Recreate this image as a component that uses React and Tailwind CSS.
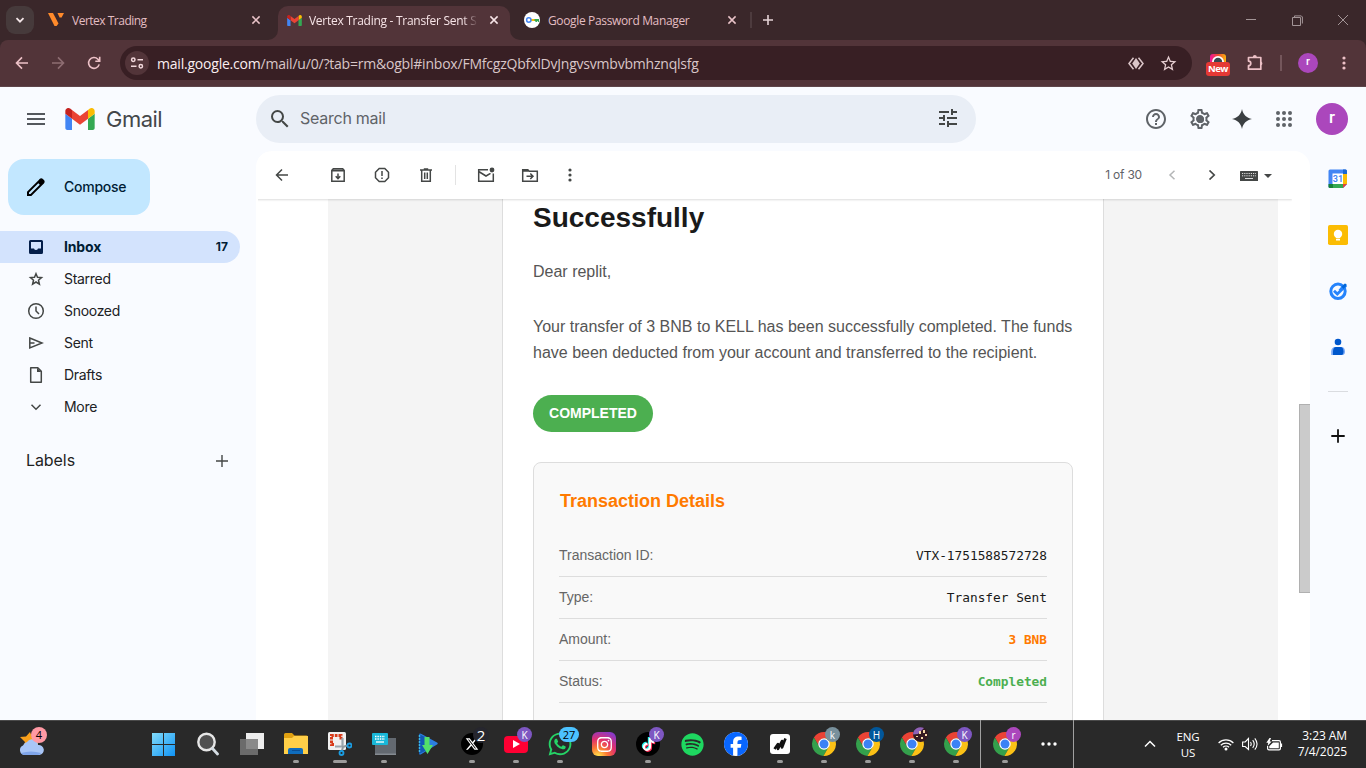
import React from "react";
import { MdStarBorder, MdSearch, MdTune, MdHelpOutline, MdOutlineSettings } from "react-icons/md";
import { FaWhatsapp, FaInstagram, FaTiktok, FaSpotify, FaFacebook, FaXTwitter } from "react-icons/fa6";

const segoe = "font-['Open_Sans','Noto_Sans',sans-serif]";
const google = "font-['Inter',sans-serif]";
const arial = "font-['Liberation_Sans',Arial,sans-serif]";
const mono = "font-['DejaVu_Sans_Mono',monospace]";

/* Stroke icon on a square grid; one unit is one pixel. */
function Line({ s = 20, w = 1.5, className = "", children }) {
  return (
    <svg width={s} height={s} viewBox={`0 0 ${s} ${s}`} fill="none" stroke="currentColor" strokeWidth={w} className={`shrink-0 ${className}`}>
      {children}
    </svg>
  );
}

function Cell({ className = "", children }) {
  return <div className={`flex h-full shrink-0 items-center justify-center ${className}`}>{children}</div>;
}

function GmailMark({ className }) {
  return (
    <svg viewBox="52 42 88 66" className={className}>
      <path fill="#4285f4" d="M58 108h14V74L52 59v43c0 3.32 2.69 6 6 6" />
      <path fill="#34a853" d="M120 108h14c3.32 0 6-2.69 6-6V59l-20 15" />
      <path fill="#fbbc04" d="M120 48v26l20-15v-8c0-7.42-8.47-11.65-14.4-7.2" />
      <path fill="#ea4335" d="M72 74V48l24 18 24-18v26L96 92" />
      <path fill="#c5221f" d="M52 51v8l20 15V48l-5.6-4.2c-5.94-4.45-14.4-.22-14.4 7.2" />
    </svg>
  );
}

function CloseX({ className = "text-[#e9c3c8]" }) {
  return <Line s={10} w={1.5} className={className}><path d="M1.4 1.4l7.2 7.2M8.6 1.4L1.4 8.6" /></Line>;
}

function TabStrip() {
  return (
    <div className={`flex h-10 bg-[#3a272a] text-[12px] text-[#e3bdc2] ${segoe}`}>
      <div className="ml-[6px] mt-[6px] flex size-7 items-center justify-center rounded-[9px] bg-[#463a3b] text-[#f3e6e8]">
        <Line s={10} w={1.8}><path d="M1.5 3.2L5 6.700l3.500-3.500" /></Line>
      </div>
      <div className="ml-[14px] flex h-10 w-[230px] items-center">
        <svg width="16" height="14" viewBox="0 0 16 14">
          <path fill="#ff8a2b" d="M0 0h5l5.500 10.500L8.600 13H6.500z" />
          <path fill="#ff8a2b" d="M9.500 0H16l-2.400 4.400h-2z" />
        </svg>
        <span className="ml-2 w-[179px] whitespace-nowrap pt-px tracking-[-0.5px]">Vertex Trading</span>
        <CloseX />
      </div>
      <div className="relative mt-[6px] flex h-[34px] w-[232px] items-center rounded-t-[10px] bg-[#523439] text-[#f7e4e7]">
        <svg width="10" height="10" className="absolute -left-[10px] bottom-0"><path d="M10 0v10H0A10 10 0 0 0 10 0" fill="#523439" /></svg>
        <svg width="10" height="10" className="absolute -right-[10px] bottom-0"><path d="M0 0v10h10A10 10 0 0 1 0 0" fill="#523439" /></svg>
        <GmailMark className="mb-[6px] ml-[9px] h-[11px] w-[15px]" />
        <span className="mb-[5px] ml-[7px] w-[168px] whitespace-nowrap tracking-[-0.28px] [mask-image:linear-gradient(to_right,black_154px,transparent_169px)]">Vertex Trading - Transfer Sent Su</span>
        <CloseX className="mb-[6px] ml-[12px] text-[#f7e4e7]" />
      </div>
      <div className="ml-[14px] flex h-10 w-[226px] items-center">
        <svg width="16" height="16" viewBox="0 0 16 16">
          <circle cx="8" cy="8" r="8" fill="#fff" />
          <path d="M7 8h4" stroke="#fbbc04" strokeWidth="2" />
          <path d="M10.500 7H15v3h-1.200V9h-.8v1h-1.600V9h-.9z" fill="#34a853" />
          <circle cx="4.800" cy="8" r="2.200" fill="none" stroke="#4285f4" strokeWidth="1.500" />
        </svg>
        <span className="ml-2 w-[179px] whitespace-nowrap pt-px tracking-[-0.35px]">Google Password Manager</span>
        <CloseX />
      </div>
      <div className="mt-3 h-4 w-[2px] bg-[#4d3b3e]" />
      <Cell className="ml-[6px] w-5 text-[#e5d3d6]"><Line s={12} w={1.600}><path d="M6 1v10M1 6h10" /></Line></Cell>
      <div className="ml-auto flex h-10 text-[#a39597]">
        <Cell className="w-[46px]"><Line s={10} w={1}><path d="M0 4.500h10" /></Line></Cell>
        <Cell className="w-[46px]"><Line s={11} w={1}><path d="M.5 2.500h8v8h-8zM2.500 2V.9h6.800L10.400 2v6.500" /></Line></Cell>
        <Cell className="w-[46px]"><Line s={10} w={1}><path d="M0 0l10 10M10 0L0 10" /></Line></Cell>
      </div>
    </div>
  );
}

function AddressBar() {
  return (
    <div className="bg-[#3a272a]">
      <div className={`flex h-[47px] items-center rounded-t-[8px] border-b border-[#5e454a] bg-[#523439] pl-1 text-[#edc1c7] ${segoe}`}>
        <Cell className="w-9"><Line s={14} w={1.600}><path d="M13 7H2M7 1.400L1.500 7 7 12.600" /></Line></Cell>
        <Cell className="w-9 text-[#8e6d72]"><Line s={14} w={1.600}><path d="M1 7h11M7 1.400L12.500 7 7 12.600" /></Line></Cell>
        <Cell className="w-9"><Line s={14} w={1.600}><path d="M12.200 8.400A5.400 5.400 0 1 1 10.900 3.200L12.600 5M12.700 .8V5.200H8.300" /></Line></Cell>
        <div className="ml-2 flex h-[34px] w-[1072px] items-center rounded-full bg-[#381f24] pl-[5px]">
          <div className="flex size-6 items-center justify-center rounded-full bg-[#523439] text-[#f2d8dc]">
            <Line s={14} w={1.500}><circle cx="3.300" cy="3.800" r="1.700" /><path d="M7.500 3.800H13M1 10.200h5.500" /><circle cx="10.800" cy="10.200" r="1.700" /></Line>
          </div>
          <span className="ml-2 w-[540px] whitespace-nowrap text-[14px] tracking-[-0.21px] text-[#d8c6c8]"><span className="text-[#fbeef0]">mail.google.com</span>/mail/u/0/?tab=rm&amp;ogbl#inbox/FMfcgzQbfxlDvJngvsvmbvbmhznqlsfg</span>
          <Cell className="ml-[423px] w-8 text-[#dcc6c9]">
            <svg width="16" height="13" viewBox="0 0 16 13" fill="none" stroke="currentColor" strokeWidth="1.500">
              <path d="M5.500 .8L1 6.500l4.500 5.700M10.500 .8l4.500 5.700-4.500 5.700" /><path d="M8 1l3.800 5.500L8 12 4.200 6.500z" fill="currentColor" stroke="none" />
            </svg>
          </Cell>
          <Cell className="w-8 text-[#e6ced1]"><MdStarBorder size={19} /></Cell>
        </div>
        <div className="ml-[7px] flex w-9 flex-col items-center pl-[2px] pt-[4px]">
          <svg width="16" height="8" viewBox="0 0 16 8">
            <defs><linearGradient id="ext"><stop stopColor="#f0149a" /><stop offset=".5" stopColor="#f04a30" /><stop offset="1" stopColor="#fbb40e" /></linearGradient></defs>
            <rect width="16" height="12" rx="3" fill="url(#ext)" /><circle cx="8" cy="8" r="6" fill="#fff" /><circle cx="8" cy="8" r="4.200" fill="#37474f" />
          </svg>
          <div className="flex h-[14px] w-6 items-center justify-center rounded-[3px] bg-[#e53935] text-[9.500px] font-bold tracking-[-0.450px] text-white">New</div>
        </div>
        <Cell className="ml-[2px] w-9 pl-[2px]"><Line s={18} w={1.700}><path d="M1.500 3.500h12.300v11.700H1.500v-3.500a2.300 2.300 0 0 0 0-4.600z" strokeLinejoin="round" /><path d="M5.800 3a2 2 0 0 1 4 0zM14 7.500a2 2 0 0 1 0 3.800z" fill="currentColor" stroke="none" /></Line></Cell>
        <div className="ml-[7px] h-4 w-[2px] bg-[#74565b]" />
        <div className="ml-4 flex size-5 items-center justify-center rounded-full bg-[#ab47bc] pb-px font-['Roboto',sans-serif] text-[11px] font-medium text-white">r</div>
        <Cell className="ml-[14px] w-6"><svg width="4" height="14" fill="currentColor"><circle cx="2" cy="2" r="1.600" /><circle cx="2" cy="7" r="1.600" /><circle cx="2" cy="12" r="1.600" /></svg></Cell>
      </div>
    </div>
  );
}

function Header() {
  return (
    <div className={`flex h-16 items-center text-[#5f6368] ${google}`}>
      <Cell className="ml-3 w-12 text-[#54585d]"><svg width="18" height="12" fill="currentColor"><path d="M0 0h18v2H0zM0 5h18v2H0zM0 10h18v2H0z" /></svg></Cell>
      <GmailMark className="ml-[5px] h-[22px] w-[30px]" />
      <span className="ml-[11px] w-[150px] pt-px text-[22px] tracking-[-0.500px] text-[#44474a]">Gmail</span>
      <div className="mr-auto flex h-12 w-[720px] items-center rounded-full bg-[#e9eef6] pl-3">
        <MdSearch size={24} className="text-[#444746]" />
        <span className="ml-2 flex-1 pb-[2px] text-[16px] tracking-[-0.250px]">Search mail</span>
        <MdTune size={24} className="mb-[2px] mr-4 text-[#444746]" />
      </div>
      <Cell className="w-11"><MdHelpOutline size={24} /></Cell>
      <Cell className="w-11">
        <div className="grid place-items-center"><MdOutlineSettings size={24} className="col-start-1 row-start-1" /><span className="col-start-1 row-start-1 size-[7px] rounded-full bg-[#5f6368]" /></div>
      </Cell>
      <Cell className="w-10 text-[#3c4043]"><svg width="20" height="20" fill="currentColor"><path d="M10 0c1 5.500 4.500 9 10 10-5.500 1-9 4.500-10 10-1-5.500-4.500-9-10-10 5.500-1 9-4.500 10-10" /></svg></Cell>
      <Cell className="w-11">
        <div className="grid grid-cols-3 gap-[2px]">{Array.from({ length: 9 }, (_, i) => <span key={i} className="size-1 rounded-full bg-[#5f6368]" />)}</div>
      </Cell>
      <div className="ml-[10px] mr-[18px] flex size-8 items-center justify-center rounded-full bg-[#ab47bc] pb-[2px] font-['Roboto',sans-serif] text-[17px] font-medium text-white">r</div>
    </div>
  );
}

const folders = [
  ["Starred", <path key="a" d="M10 4.700l1.500 3.600 4 .3-3 2.600.9 3.900L10 13l-3.400 2.100.9-3.900-3-2.600 4-.3z" />],
  ["Snoozed", <g key="b"><circle cx="10" cy="10" r="7.300" /><path d="M10 5.500V10l3 3" /></g>],
  ["Sent", <path key="c" d="M3.800 5L16 10 3.800 15zM3.800 10H8.500" />],
  ["Drafts", <g key="d"><path d="M4.700 2.700h7.100l3.500 3.500v11.100H4.700z" strokeLinejoin="round" /><path d="M11 2.700v4.300h4.300z" fill="currentColor" stroke="none" /></g>],
  ["More", <path key="e" d="M5.500 7.800L10 12.300l4.500-4.500" />],
];

function Sidebar() {
  return (
    <div className={`flex w-64 shrink-0 flex-col pt-2 text-[14px] ${google}`}>
      <div className="ml-2 flex h-14 w-[142px] items-center rounded-2xl bg-[#c2e7ff] pl-[18px] font-medium text-[#001d35]">
        <svg width="20" height="20" viewBox="0 0 20 20"><path fillRule="evenodd" fill="#000" d="M1 14.700L12.800 2.900l.8-.8c1-1 2.300-1 3.300 0l1 1c1 1 1 2.300 0 3.300l-.8.800L5.300 19H1zm2 .8V17h1.500l9.300-9.300-1.500-1.500z" /></svg>
        <span className="ml-[18px] pb-px tracking-[-0.250px]">Compose</span>
      </div>
      <div className="mt-4 flex h-8 w-60 items-center rounded-r-full bg-[#d3e3fd] pb-px pl-[26px] font-bold text-[#001d35]">
        <svg width="20" height="20" className="mt-px text-[#041e49]" fill="currentColor"><path fillRule="evenodd" d="M4.500 3h11Q17 3 17 4.500v11q0 1.500-1.500 1.500h-11Q3 17 3 15.500v-11Q3 3 4.500 3zM5 5v6.500h3q.5 1.500 2 1.500t2-1.500h3V5z" /></svg>
        <span className="ml-[18px] flex-1 tracking-[-0.150px]">Inbox</span>
        <span className="mr-3 text-[12px]">17</span>
      </div>
      {folders.map(([name, shape]) => (
        <div key={name} className="flex h-8 items-center pl-[26px] tracking-[-0.300px] text-[#202124]">
          <Line s={20} w={1.500} className="text-[#444746]">{shape}</Line>
          <span className="ml-[18px] pb-[2px]">{name}</span>
        </div>
      ))}
      <div className="mt-[22px] flex h-[31px] w-60 items-center justify-between pl-[26px] pr-3 text-[16px] tracking-[-0.080px] text-[#1f1f1f]">
        <span className="pb-px">Labels</span>
        <Line s={12} w={1.400} className="text-[#444746]"><path d="M6 0v12M0 6h12" /></Line>
      </div>
    </div>
  );
}

function MailToolbar() {
  return (
    <div className="relative z-10 mr-[18px] flex h-12 shrink-0 items-center bg-white pl-1 text-[#444746] shadow-[0_1px_2px_rgba(0,0,0,0.14)] [clip-path:inset(0_0_-3px_2px)]">
      <Cell className="w-11"><Line s={14} w={1.500}><path d="M13 7H1.500M7 1.500L1.500 7 7 12.500" /></Line></Cell>
      <Cell className="ml-3 w-11"><Line s={16} w={1.500}><path d="M1.800 3.500L3.300 1.700h9.400l1.500 1.800v10.700H1.800zM8 6.500v5M5.700 9.300L8 11.600l2.300-2.300" /><path d="M1.800 3.500h12.400" strokeWidth="2" /></Line></Cell>
      <Cell className="w-11"><Line s={16} w={1.500}><path d="M5.200 1.500h5.600l3.700 3.700v5.600l-3.700 3.700H5.200l-3.700-3.700V5.200z" /><path d="M8 4v5M8 10.500V12" /></Line></Cell>
      <Cell className="w-11"><Line s={16} w={1.500}><path d="M3.700 3.500v10.800h8.600V3.500M2 3h12M5.800 2h4.400M6.700 5.500v6.500M9.300 5.500v6.500" /></Line></Cell>
      <div className="ml-[7px] mr-2 h-5 w-px bg-[#e3e3e3]" />
      <Cell className="w-11"><svg width="18" height="16" viewBox="0 0 18 16" fill="none" stroke="currentColor" strokeWidth="1.500"><path d="M11 2.700H1.700v11.500h14.600V6.500M1.700 4.500L9 9l4.500-2.700" /><circle cx="15" cy="3" r="2.400" fill="currentColor" stroke="none" /></svg></Cell>
      <Cell className="w-11"><svg width="18" height="16" viewBox="0 0 18 16" fill="none" stroke="currentColor" strokeWidth="1.500"><path d="M1.700 2.700h5l1.600 1.500h8v10H1.700zM5.500 9.200h6M9.300 6.500L12 9.200 9.300 12" /><path d="M1.700 3.700h6" strokeWidth="2" /></svg></Cell>
      <Cell className="w-9"><svg width="4" height="14" fill="currentColor"><circle cx="2" cy="2" r="1.600" /><circle cx="2" cy="7" r="1.600" /><circle cx="2" cy="12" r="1.600" /></svg></Cell>
      <span className={`ml-auto text-[12px] tracking-[-0.200px] text-[#5f6368] ${google}`}>1 of 30</span>
      <Cell className="ml-[10px] w-10 text-[#b4b6b7]"><Line s={10} w={1.500}><path d="M7.500 .8L3 5l4.500 4.200" /></Line></Cell>
      <Cell className="w-10"><Line s={10} w={1.700}><path d="M2.500 .5L7.200 5 2.500 9.500" /></Line></Cell>
      <Cell className="ml-2 w-[18px] pt-[2px]">
        <svg width="18" height="10"><rect width="18" height="10" fill="#444746" rx=".5" /><path d="M2 2.500h14M2 4.800h14" stroke="#ddd" strokeWidth="1" strokeDasharray="1.200 1" /><path d="M5 7.500h8" stroke="#ddd" strokeWidth="1" /></svg>
      </Cell>
      <Cell className="mr-[15px] w-[19px] pt-px"><svg width="8" height="4" className="ml-px"><path d="M0 0h8L4 4z" fill="#444746" /></svg></Cell>
    </div>
  );
}

const details = [
  ["Transaction ID:", "VTX-1751588572728", "text-[#1a1a1a]"],
  ["Type:", "Transfer Sent", "text-[#1a1a1a]"],
  ["Amount:", "3 BNB", "font-bold text-[#ff7a00]"],
  ["Status:", "Completed", "font-bold text-[#4caf50]"],
];

function MailBody() {
  return (
    <div className="flex min-h-0 flex-1">
      <div className={`ml-[72px] flex w-[950px] overflow-hidden bg-[#f4f4f4] pl-[174px] ${arial}`}>
        <div className="w-[602px] border-x border-[#ddd] bg-white px-[30px]">
          <h1 className="mt-[2px] h-[35px] text-[28px] font-bold leading-[34px] text-[#1a1a1a]">Successfully</h1>
          <p className="mt-[23px] text-[16px] leading-[26px] text-[#555]">Dear replit,</p>
          <p className="mt-[29px] whitespace-nowrap text-[16px] leading-[26px] text-[#555]">
            Your transfer of 3 BNB to KELL has been successfully completed. The funds<br />
            have been deducted from your account and transferred to the recipient.
          </p>
          <div className="mt-[29px] flex h-[37px] w-[120px] items-center justify-center rounded-[20px] bg-[#4caf50] text-[14px] font-bold text-white">COMPLETED</div>
          <div className="mt-[30px] h-[300px] rounded-lg border border-[#ddd] bg-[#f9f9f9] px-[25px] pt-[25px]">
            <h3 className="mb-[23px] h-6 pl-px text-[18px] font-bold leading-[26px] text-[#ff7a00]">Transaction Details</h3>
            {details.map(([k, v, tone]) => (
              <div key={k} className="flex h-[42px] items-center justify-between border-b border-[#ddd] text-[14px] text-[#666]">
                <span>{k}</span>
                <span className={`text-[12.8px] ${mono} ${tone}`}>{v}</span>
              </div>
            ))}
          </div>
        </div>
      </div>
      <div className="ml-auto w-[11px] pt-[205px]"><div className="h-[189px] border border-r-0 border-[#b0b0b0] bg-[#cbcbcb]" /></div>
    </div>
  );
}

function SidePanel() {
  return (
    <div className="flex w-14 shrink-0 flex-col items-center pt-[18px]">
      <svg width="20" height="20" viewBox="0 0 20 20">
        <rect x=".5" y=".5" width="18.500" height="18.500" fill="#4285f4" rx="1.500" /><path d="M15 5h4v10h-4z" fill="#fbbc04" /><path d="M15 .5h2.500A1.500 1.500 0 0 1 19 2v3h-4z" fill="#1967d2" />
        <path d="M5 15h10v4H5z" fill="#34a853" /><path d="M.5 15H5v4H2A1.500 1.500 0 0 1 .5 17.500z" fill="#188038" /><path d="M19.200 15v4.200H15z" fill="#f9fbff" /><path d="M15 15h4l-4 4z" fill="#ea4335" />
        <rect x="4.500" y="4.500" width="10.500" height="10.500" fill="#fff" /><text x="10" y="13.200" textAnchor="middle" fontSize="9" fontWeight="600" fontFamily="Roboto, sans-serif" fill="#4285f4">31</text>
      </svg>
      <svg width="20" height="20" viewBox="0 0 20 20" className="mt-9">
        <rect width="20" height="20" rx="1.800" fill="#fbbc04" /><circle cx="10" cy="9" r="4.200" fill="#fff" /><path d="M8 11h4v2.200H8zM8 14h4v1.500H8z" fill="#fff" />
      </svg>
      <svg width="20" height="20" viewBox="0 0 20 20" className="mt-9">
        <circle cx="10" cy="10.300" r="7.200" fill="none" stroke="#2684fc" strokeWidth="3" /><path d="M10.500 9L15 3.500 18 6l-3 3" fill="#2684fc" /><path d="M6 9.800l3.300 3.300L18 4.500" fill="none" stroke="#2684fc" strokeWidth="2.800" /><path d="M13.500 5.800l3.300-3.300q1.800.2 2 1.800L15.500 8z" fill="#0066da" />
      </svg>
      <svg width="20" height="20" viewBox="0 0 20 20" className="mt-9">
        <circle cx="10" cy="5" r="3.300" fill="#0057cc" /><path d="M3.200 18v-3.500C3.200 11.500 5 10 7 10h6.500c2.300 0 3.500 1.800 3.500 4.500 0 2-.8 3.500-2.500 3.500z" fill="#7baaf7" /><path d="M5 18v-3.500c0-2.500 1-4.500 3-4.500h4.500c2 0 3 2 3 4.500 0 2-.7 3.500-2 3.500z" fill="#0057cc" />
      </svg>
      <div className="mt-[34px] h-px w-5 bg-[#dadce0]" />
      <Line s={14} w={1.800} className="mt-[37px] text-[#111]"><path d="M7 .3v13.400M.3 7h13.400" /></Line>
    </div>
  );
}

function Chrome() {
  return (
    <svg width="24" height="24" viewBox="0 0 48 48">
      <path fill="#ea4335" d="M24 13H45.330A24 24 0 0 0 3.810 11.030L14.500 29.500A11 11 0 0 1 24 13z" />
      <path fill="#34a04c" d="M14.500 29.500L3.810 11.030A24 24 0 0 0 22.860 47.970L33.500 29.500z" />
      <path fill="#fbc116" d="M33.500 29.500L22.860 47.970A24 24 0 0 0 45.330 13H24z" />
      <circle cx="24" cy="24" r="11.500" fill="#fff" /><circle cx="24" cy="24" r="9" fill="#3b82f6" />
    </svg>
  );
}

function Task({ children, badge, tone = "", run = "w-[6px]" }) {
  return (
    <div className="relative flex h-12 w-11 shrink-0 items-center justify-center">
      {children}
      {badge !== undefined && <span className={`absolute left-[23px] top-[7px] flex h-[15px] min-w-[15px] items-center justify-center rounded-full text-[10px] leading-none text-white ${tone}`}>{badge}</span>}
      {run && <span className={`absolute bottom-[5px] h-[3px] rounded-full bg-[#9b9b9b] ${run}`} />}
    </div>
  );
}

function Taskbar() {
  return (
    <div className={`flex h-12 border-t border-[#4a4a4a] bg-[#292929] text-white ${segoe}`}>
      <div className="-mt-px flex w-full">
        <div className="relative ml-[18px] mr-[95px] w-[29px]">
          <svg width="26" height="29" viewBox="0 0 26 29" className="mt-[7px]">
            <path d="M12 5l2 5h6v8H6l1-3-5-5 6-.500z" fill="#f9a01b" />
            <path d="M6 28a5 5 0 0 1-1-9.500 6 6 0 0 1 4-3.500A6 6 0 0 1 20 18a5 5 0 0 1 1.500 10z" fill="#a9c6f7" /><path d="M3 26q10-3 20 0-1 2-3 2H6q-2 0-3-2" fill="#7fa5ea" />
          </svg>
          <span className="absolute left-[13px] top-[7px] flex size-4 items-center justify-center rounded-full bg-[#ff99a4] text-[11px] text-black">4</span>
        </div>
        <Task run=""><svg width="23" height="23" className="-ml-px"><defs><linearGradient id="win" x2="1" y2="1"><stop stopColor="#82dcfb" /><stop offset="1" stopColor="#0f93f5" /></linearGradient></defs><path fill="url(#win)" d="M0 0h11v11H0zM12 0h11v11H12zM0 12h11v11H0zM12 12h11v11H12z" /></svg></Task>
        <Task run=""><svg width="22" height="24" fill="none"><circle cx="9.500" cy="10" r="8.200" fill="#505050" stroke="#e6e6e6" strokeWidth="2.400" /><path d="M15.500 16.500l5 5.500" stroke="#d5dde3" strokeWidth="2.800" strokeLinecap="round" /></svg></Task>
        <Task run=""><svg width="24" height="22"><path d="M6 0h18v16H6z" fill="#ededed" /><path d="M0 6h18v16H0z" fill="#777" fillOpacity=".85" /></svg></Task>
        <Task><svg width="24" height="22"><path d="M0 1.500Q0 0 1.500 0H8l2.500 2.500H22.500Q24 2.500 24 4V20.500H0z" fill="#e0a010" /><path d="M0 5h8l2-2h14v18H0z" fill="#ffcf48" /><path d="M4 21v-4q0-2 2-2h11q2 0 2 2v4z" fill="#0f6cbd" /><path d="M8 17.500h8" stroke="#0a4d94" /></svg></Task>
        <Task run="w-[14px]"><svg width="24" height="24"><rect width="18" height="18" rx="1.500" fill="#f1f1f1" /><path d="M6 12.500H3.500V3.500H13V8" fill="none" stroke="#d83b1a" strokeWidth="3" strokeDasharray="2.700 1" /><path d="M14.500 6v9M7 14.500h8" stroke="#9aa5ad" strokeWidth="2.200" /><path d="M14 18.500l1-3.500 4-1.500" stroke="#8e999f" strokeWidth="2" fill="none" /><circle cx="13.500" cy="21" r="2" fill="none" stroke="#1b9de2" strokeWidth="1.800" /><circle cx="21.500" cy="13.500" r="2" fill="none" stroke="#1b9de2" strokeWidth="1.800" /></svg></Task>
        <Task><svg width="24" height="22"><path d="M3 5h21v17H3z" fill="#636970" /><path d="M3 20.500h21V22H3z" fill="#858b91" /><rect width="16" height="12" rx="1" fill="#18b7d8" /><path d="M3 3.500h10M3 6h10" stroke="#fff" strokeWidth="1.300" strokeDasharray="1.500 .9" /><path d="M4 9h8" stroke="#fff" strokeWidth="1.300" /></svg></Task>
        <Task run=""><svg width="20" height="22"><path d="M1 1q1-1 2.500 0L19 9.500q1.500 1 0 2L3.500 21Q2 22 1 21z" fill="#2c7fe0" /><path d="M1 1l8 4v12l-8 4z" fill="#1259b5" /><path d="M1.500 2v18" stroke="#38b5e8" strokeWidth="1.500" strokeDasharray="2 1" /><path d="M6.500 4h5v8H15l-5.500 9L4 12h2.500z" fill="#52e06a" /></svg></Task>
        <Task badge="2" tone="!h-[16px] !min-w-[16px] bg-[#26262e] text-[15px]"><div className="flex size-[22px] items-center justify-center rounded-full bg-black"><FaXTwitter size={14} /></div></Task>
        <Task badge="K" tone="bg-[#7e57c2]"><div className="flex h-[17px] w-6 items-center justify-center rounded-[4px] bg-[#ff0033]"><svg width="7" height="8"><path d="M0 0l7 4-7 4z" fill="#fff" /></svg></div></Task>
        <Task badge="27" tone="!left-[21px] !w-5 bg-[#4cc2ff] !text-[11px] !text-black"><FaWhatsapp size={26} className="text-[#25d366]" /></Task>
        <Task run=""><div className="flex size-6 items-center justify-center rounded-[6px] bg-[radial-gradient(circle_at_25%_105%,#ffd54a_8%,#fb7b33_30%,#e1306c_58%,#8a3ac8_88%)]"><FaInstagram size={17} /></div></Task>
        <Task badge="K" tone="bg-[#7e57c2]"><div className="relative size-6 rounded-full bg-black"><FaTiktok size={13} className="absolute left-[5px] top-[5px] text-[#25f4ee]" /><FaTiktok size={13} className="absolute left-[6.500px] top-[6.500px] text-[#fe2c55]" /><FaTiktok size={13} className="absolute left-[5.800px] top-[5.800px]" /></div></Task>
        <Task run=""><FaSpotify size={23} className="text-[#1ed760]" /></Task>
        <Task run=""><div className="rounded-full bg-white"><FaFacebook size={24} className="text-[#0866ff]" /></div></Task>
        <Task><svg width="20" height="20"><rect width="20" height="20" rx="3" fill="#fff" /><path d="M4.500 15l3.500-5v5l4-8v6.500l3.500-9" fill="none" stroke="#111" strokeWidth="2.600" strokeLinejoin="round" /></svg></Task>
        <Task badge="k" tone="bg-[#78909c]"><Chrome /></Task>
        <Task badge="H" tone="bg-[#01579b]"><Chrome /></Task>
        <Task badge={<svg width="15" height="15"><circle cx="7.500" cy="7.500" r="7.500" fill="#351a22" /><path d="M0 7.500A7.500 7.500 0 0 1 11 1L5 7z" fill="#8e63b8" /><path d="M6 4h2v3H6zM10 3h2v3h-2zM3 9h2v1H3zM8 10h2v2H8zM12 7h2v2h-2z" fill="#f5d9a6" /></svg>}><Chrome /></Task>
        <Task badge="K" tone="bg-[#7e57c2]"><Chrome /></Task>
        <div className="ml-[2px] mr-[2px] w-px bg-[#a0a0a0]" />
        <Task badge="r" tone="bg-[#ab47bc]"><Chrome /></Task>
        <Task run=""><svg width="16" height="4" fill="#fff"><circle cx="2" cy="2" r="1.700" /><circle cx="8" cy="2" r="1.700" /><circle cx="14" cy="2" r="1.700" /></svg></Task>
        <div className="ml-[2px] w-px bg-[#a0a0a0]" />
        <Cell className="ml-[64px] w-6"><Line s={12} w={1.500}><path d="M1 8.500l5-5 5 5" /></Line></Cell>
        <div className="ml-[6px] flex h-12 w-10 flex-col items-center justify-center pt-[2px] text-[11.500px] leading-4 tracking-[-0.100px]"><span>ENG</span><span>US</span></div>
        <Cell className="ml-[6px] w-6"><svg width="16" height="13" fill="none" stroke="#fff" strokeWidth="1.200"><path d="M.6 5a10.500 10.500 0 0 1 14.800 0M2.800 7.200a7.400 7.400 0 0 1 10.400 0M5 9.300a4.300 4.300 0 0 1 6 0" /><circle cx="8" cy="11" r="1.500" fill="#fff" stroke="none" /></svg></Cell>
        <Cell className="w-6"><svg width="16" height="14" fill="none" stroke="#fff" strokeWidth="1.100"><path d="M.6 5h2.600L6.500 1.500v11L3.200 9.500H.6zM8.500 5q1.400 2 0 4M10.700 3.200q3 3.800 0 7.600M12.800 1.300q4.500 5.700 0 11.400" /></svg></Cell>
        <Cell className="w-6"><svg width="17" height="13" fill="none" stroke="#fff" strokeWidth="1.200"><path d="M6 2.600h7q1.400 0 1.400 1.400v6.500q0 1.400-1.400 1.400H3q-1.400 0-1.400-1.400V8M15.500 5.500v3.500" /><path d="M7 4.400h5.800v5.800H3.300V8.300z" fill="#fff" stroke="none" /><path d="M3.500 0L.3 4.700h2L1.500 8 5.700 3.500h-2L5 0z" fill="#fff" stroke="none" /></svg></Cell>
        <div className="ml-auto mr-[19px] flex flex-col items-end justify-center text-[12px] leading-4 tracking-[-0.080px]"><span>3:23 AM</span><span>7/4/2025</span></div>
      </div>
    </div>
  );
}

export default function App() {
  return (
    <div className="flex h-[768px] w-[1366px] flex-col overflow-hidden bg-[#f9fbff]">
      <TabStrip />
      <AddressBar />
      <Header />
      <div className="flex min-h-0 flex-1">
        <Sidebar />
        <main className="flex w-[1054px] flex-col overflow-hidden rounded-t-2xl bg-white">
          <MailToolbar />
          <MailBody />
        </main>
        <SidePanel />
      </div>
      <Taskbar />
    </div>
  );
}
